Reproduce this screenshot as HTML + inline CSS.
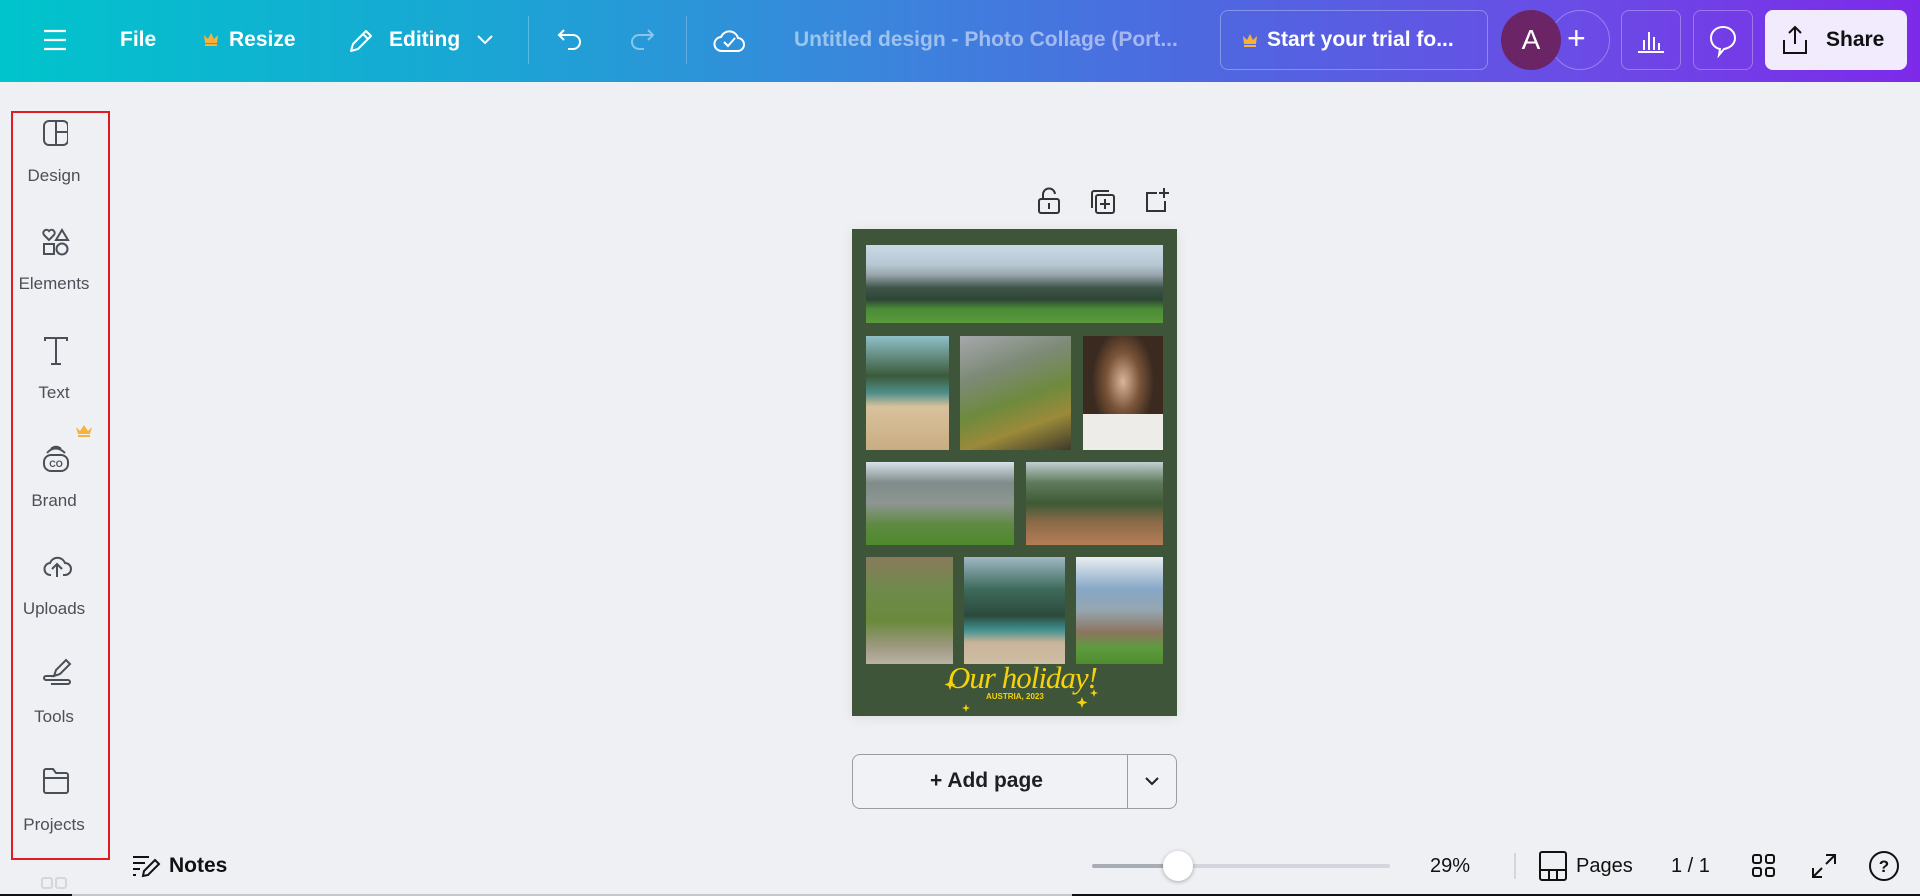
<!DOCTYPE html>
<html><head><meta charset="utf-8"><style>
*{margin:0;padding:0;box-sizing:border-box}
body{width:1920px;height:896px;overflow:hidden;background:#eff0f4;font-family:"Liberation Sans",sans-serif;position:relative}
.top{position:absolute;left:0;top:0;width:1920px;height:82px;background:linear-gradient(90deg,#00c4cc 0%,#1aa6d4 25%,#3a86dc 45%,#4d69e0 62%,#6a4ce6 82%,#7d2ae8 100%)}
.a{position:absolute}
.tw{color:#fff;font-weight:bold;font-size:21px;top:28px}
.lbl{position:absolute;width:98px;left:5px;text-align:center;font-size:16px;color:#4b4f57}
.ic{position:absolute;left:42px}
.ph{position:absolute}
</style></head><body>
<div class="top">
  <svg class="a" style="left:42px;top:28px" width="26" height="24"><path d="M2 3h22M2 12h22M2 21h22" stroke="#fff" stroke-width="2.2"/></svg>
  <div class="a tw" style="left:120px">File</div>
  <svg class="a" style="left:203px;top:31px" width="16" height="16"><path d="M1 4l4 4 3-6 3 6 4-4-1 8H2z" fill="#f7b23b"/><rect x="2" y="13" width="12" height="2" fill="#f7b23b"/></svg>
  <div class="a tw" style="left:229px">Resize</div>
  <svg class="a" style="left:346px;top:26px" width="30" height="30"><path d="M5 25l2-7L20 5l5 5-13 13zM17 8l5 5" stroke="#fff" stroke-width="2" fill="none" stroke-linejoin="round"/></svg>
  <div class="a tw" style="left:389px">Editing</div>
  <svg class="a" style="left:476px;top:34px" width="18" height="12"><path d="M2 2l7 7 7-7" stroke="#fff" stroke-width="2" fill="none"/></svg>
  <div class="a" style="left:528px;top:16px;width:1px;height:48px;background:rgba(255,255,255,.25)"></div>
  <svg class="a" style="left:556px;top:26px" width="30" height="28"><path d="M8 4L3 9l5 5M3 9h14a7 7 0 010 14h-5" stroke="#fff" stroke-width="2" fill="none"/></svg>
  <svg class="a" style="left:626px;top:26px" width="30" height="28"><path d="M22 4l5 5-5 5M27 9H13a7 7 0 000 14h5" stroke="rgba(255,255,255,.45)" stroke-width="2" fill="none"/></svg>
  <div class="a" style="left:686px;top:16px;width:1px;height:48px;background:rgba(255,255,255,.25)"></div>
  <svg class="a" style="left:713px;top:24px" width="34" height="32"><path d="M9 27a7 7 0 01-1-14 9 9 0 0117 1 6.5 6.5 0 01-1 13z" stroke="#fff" stroke-width="2" fill="none"/><path d="M11 18l4 4 7-8" stroke="#fff" stroke-width="2" fill="none"/></svg>
  <div class="a" style="left:794px;top:28px;font-size:21px;font-weight:bold;color:rgba(255,255,255,.5)">Untitled design - Photo Collage (Port...</div>
  <div class="a" style="left:1220px;top:10px;width:268px;height:60px;border:1px solid rgba(255,255,255,.3);border-radius:8px"></div>
  <svg class="a" style="left:1242px;top:32px" width="16" height="16"><path d="M1 4l4 4 3-6 3 6 4-4-1 8H2z" fill="#f7b23b"/><rect x="2" y="13" width="12" height="2" fill="#f7b23b"/></svg>
  <div class="a tw" style="left:1267px">Start your trial fo...</div>
  <div class="a" style="left:1550px;top:10px;width:60px;height:60px;border:1px solid rgba(255,255,255,.3);border-radius:50%"></div>
  <div class="a" style="left:1501px;top:10px;width:60px;height:60px;border-radius:50%;background:#6b2466;color:#fff;font-size:28px;text-align:center;line-height:60px">A</div>
  <div class="a" style="left:1567px;top:20px;color:#fff;font-size:32px;line-height:36px">+</div>
  <div class="a" style="left:1621px;top:10px;width:60px;height:60px;border:1px solid rgba(255,255,255,.3);border-radius:8px"></div>
  <svg class="a" style="left:1636px;top:26px" width="30" height="28"><path d="M2 26h26M8 24V14M13 24V6M18 24V11M23 24V17" stroke="#fff" stroke-width="2"/></svg>
  <div class="a" style="left:1693px;top:10px;width:60px;height:60px;border:1px solid rgba(255,255,255,.3);border-radius:8px"></div>
  <svg class="a" style="left:1707px;top:24px" width="32" height="34"><path d="M16 3C9 3 4 8 4 14s4 10 9 11l-1 6 5-6c6-1 11-5 11-11S23 3 16 3z" stroke="#fff" stroke-width="2" fill="none"/></svg>
  <div class="a" style="left:1765px;top:10px;width:142px;height:60px;border-radius:8px;background:#f1ebfd"></div>
  <svg class="a" style="left:1780px;top:24px" width="30" height="32"><path d="M15 20V3M9 9l6-6 6 6M4 16v13h22V16" stroke="#111" stroke-width="2" fill="none"/></svg>
  <div class="a" style="left:1826px;top:28px;font-size:21px;font-weight:bold;color:#111">Share</div>
</div>

<div class="a" style="left:11px;top:111px;width:99px;height:749px;border:2px solid #e01b24"></div>
<svg class="ic" style="top:119px" width="26" height="28"><rect x="2" y="2" width="24" height="24" rx="5" stroke="#4b4f57" stroke-width="2" fill="none"/><path d="M14 2v24M14 13h12" stroke="#4b4f57" stroke-width="2"/></svg>
<div class="lbl" style="top:166px;font-size:17px">Design</div>
<svg class="ic" style="top:228px" width="28" height="28"><path d="M7 12L2 7a3 3 0 015-4 3 3 0 015 4z" stroke="#4b4f57" stroke-width="2" fill="none"/><path d="M20 2l6 10H14z" stroke="#4b4f57" stroke-width="2" fill="none"/><rect x="2" y="16" width="10" height="10" stroke="#4b4f57" stroke-width="2" fill="none"/><circle cx="20" cy="21" r="5.5" stroke="#4b4f57" stroke-width="2" fill="none"/></svg>
<div class="lbl" style="top:274px;font-size:17px">Elements</div>
<svg class="ic" style="top:336px" width="28" height="30"><path d="M3 5V2h22v3M14 2v26M9 28h10" stroke="#4b4f57" stroke-width="2" fill="none"/></svg>
<div class="lbl" style="top:383px;font-size:17px">Text</div>
<svg class="a" style="left:75px;top:424px" width="18" height="14"><path d="M1 3l4 4 4-6 4 6 4-4-2 7H3z" fill="#f7b23b"/><rect x="3" y="11" width="12" height="2" fill="#f7b23b"/></svg>
<svg class="ic" style="top:443px" width="28" height="30"><path d="M5 10c5-6 12-6 18 0M9 6c3-3 7-3 10 0" stroke="#4b4f57" stroke-width="2" fill="none"/><rect x="2" y="12" width="24" height="16" rx="7" stroke="#4b4f57" stroke-width="2" fill="none"/><text x="14" y="24" font-size="9" font-weight="bold" text-anchor="middle" fill="#4b4f57" font-family="Liberation Sans">CO</text></svg>
<div class="lbl" style="top:491px;font-size:17px">Brand</div>
<svg class="ic" style="top:551px" width="30" height="28"><path d="M9 24a6 6 0 01-1-12 8 8 0 0115 0 6 6 0 010 12h-2M15 26V14M10 18l5-5 5 5" stroke="#4b4f57" stroke-width="2" fill="none"/></svg>
<div class="lbl" style="top:599px;font-size:17px">Uploads</div>
<svg class="ic" style="top:658px" width="30" height="30"><path d="M12 18l2-6 10-10 4 4-10 10z" stroke="#4b4f57" stroke-width="2" fill="none"/><path d="M12 18H4a2 2 0 000 4h22a2 2 0 010 4H9" stroke="#4b4f57" stroke-width="2" fill="none"/></svg>
<div class="lbl" style="top:707px;font-size:17px">Tools</div>
<svg class="ic" style="top:767px" width="28" height="28"><path d="M2 8V4a2 2 0 012-2h7l3 4h10a2 2 0 012 2v16a2 2 0 01-2 2H4a2 2 0 01-2-2zM2 11h24" stroke="#4b4f57" stroke-width="2" fill="none"/></svg>
<div class="lbl" style="top:815px;font-size:17px">Projects</div>
<div class="a" style="left:41px;top:877px;width:12px;height:12px;border-radius:3px;border:2px solid #d4d6db"></div>
<div class="a" style="left:55px;top:877px;width:12px;height:12px;border-radius:3px;border:2px solid #d4d6db"></div>

<svg class="a" style="left:1036px;top:187px" width="26" height="28"><rect x="3" y="12" width="20" height="14" rx="2" stroke="#333" stroke-width="2" fill="none"/><path d="M7 12V8a6 6 0 0112-1M13 16v6" stroke="#333" stroke-width="2" fill="none"/></svg>
<svg class="a" style="left:1089px;top:188px" width="28" height="28"><rect x="7" y="7" width="18" height="18" rx="2" stroke="#333" stroke-width="2" fill="none"/><path d="M3 20V5a2 2 0 012-2h15M16 11v10M11 16h10" stroke="#333" stroke-width="2" fill="none"/></svg>
<svg class="a" style="left:1143px;top:186px" width="28" height="28"><path d="M14 7H4v18h18V15M21 2v10M16 7h10" stroke="#333" stroke-width="2" fill="none"/></svg>

<div class="a" style="left:852px;top:229px;width:325px;height:487px;background:#3e5539;box-shadow:0 2px 12px rgba(0,0,0,.08)">
  <div class="ph" style="left:14px;top:16px;width:297px;height:78px;background:linear-gradient(180deg,#c9d9e6 0%,#b7c7d3 25%,#9aa6ad 38%,#3d5449 55%,#2e4634 70%,#4a8b37 82%,#5a9b3c 100%)"></div>
  <div class="ph" style="left:14px;top:107px;width:83px;height:114px;background:linear-gradient(180deg,#8fbfc8 0%,#3b5a3a 35%,#4f8f8a 50%,#d8c29c 62%,#c9ad82 100%)"></div>
  <div class="ph" style="left:108px;top:107px;width:111px;height:114px;background:linear-gradient(160deg,#a6a8ab 0%,#7d8a77 30%,#6e8a3d 55%,#9b8a3a 75%,#3e3a2a 100%)"></div>
  <div class="ph" style="left:231px;top:107px;width:80px;height:114px;background:radial-gradient(ellipse at 50% 40%,#d9b59a 0%,#7a5438 30%,#3a2a20 55%),linear-gradient(180deg,#3a2a1f,#f2f0ee);"></div>
  <div class="ph" style="left:231px;top:185px;width:80px;height:36px;background:#eeece8"></div>
  <div class="ph" style="left:14px;top:233px;width:148px;height:83px;background:linear-gradient(180deg,#d7e2ea 0%,#7f8c8a 25%,#8e9691 50%,#5f8a43 75%,#4d8a2c 100%)"></div>
  <div class="ph" style="left:174px;top:233px;width:137px;height:83px;background:linear-gradient(180deg,#c2cfd2 0%,#5f7a5b 25%,#3e5a35 50%,#8a6a48 72%,#b47d55 100%)"></div>
  <div class="ph" style="left:14px;top:328px;width:87px;height:107px;background:linear-gradient(180deg,#8a7a5c 0%,#6f8a4c 30%,#6a8a3c 60%,#a09a84 85%,#b9b3a3 100%)"></div>
  <div class="ph" style="left:112px;top:328px;width:101px;height:107px;background:linear-gradient(180deg,#9fb8c4 0%,#3e6a5c 30%,#2c4a3c 55%,#3f9090 68%,#c8b49a 80%,#cfbea4 100%)"></div>
  <div class="ph" style="left:224px;top:328px;width:87px;height:107px;background:linear-gradient(180deg,#e9eef2 0%,#86a7c6 30%,#95a6b0 50%,#8c7560 70%,#5e9a3e 85%,#4f8e30 100%)"></div>
  <svg class="a" style="left:90px;top:440px" width="160" height="50"><path d="M8 10l1.5 4 4 1.5-4 1.5-1.5 4-1.5-4-4-1.5 4-1.5z" fill="#f5d20c"/><path d="M140 28l1.5 4 4 1.5-4 1.5-1.5 4-1.5-4-4-1.5 4-1.5z" fill="#f5d20c"/><path d="M24 35l1 3 3 1-3 1-1 3-1-3-3-1 3-1z" fill="#f5d20c"/><path d="M152 20l1 3 3 1-3 1-1 3-1-3-3-1 3-1z" fill="#f5d20c"/></svg>
  <div class="a" style="left:96px;top:432px;width:144px;text-align:center;white-space:nowrap;font-family:'Liberation Serif',serif;font-style:italic;font-size:31px;color:#f5d20c;letter-spacing:-1px;line-height:34px">Our holiday!</div>
  <div class="a" style="left:134px;top:463px;font-size:8px;font-weight:bold;color:#f5d20c;white-space:nowrap">AUSTRIA, 2023</div>
</div>

<div class="a" style="left:852px;top:754px;width:325px;height:55px;border:1px solid #9a9ca3;border-radius:8px;background:#f1f2f5"></div>
<div class="a" style="left:1127px;top:755px;width:1px;height:53px;background:#9a9ca3"></div>
<div class="a" style="left:930px;top:769px;font-size:21px;font-weight:bold;color:#1f1f23">+ Add page</div>
<svg class="a" style="left:1144px;top:776px" width="16" height="10"><path d="M2 2l6 6 6-6" stroke="#1f1f23" stroke-width="2" fill="none"/></svg>

<svg class="a" style="left:131px;top:853px" width="30" height="26"><path d="M2 4h16M2 10h12M2 16h7M2 22h3" stroke="#111" stroke-width="2"/><path d="M12 23l1-5 11-11 4 4-11 11z" stroke="#111" stroke-width="2" fill="none"/></svg>
<div class="a" style="left:169px;top:854px;font-size:21px;font-weight:bold;color:#111">Notes</div>
<div class="a" style="left:1092px;top:864px;width:298px;height:4px;border-radius:2px;background:#d3d6dd"></div>
<div class="a" style="left:1092px;top:864px;width:86px;height:4px;border-radius:2px;background:#a8acb4"></div>
<div class="a" style="left:1163px;top:851px;width:30px;height:30px;border-radius:50%;background:#fff;box-shadow:0 1px 4px rgba(0,0,0,.3)"></div>
<div class="a" style="left:1430px;top:855px;font-size:20px;color:#111">29%</div>
<div class="a" style="left:1514px;top:853px;width:2px;height:26px;background:#d3d6dd"></div>
<svg class="a" style="left:1538px;top:850px" width="30" height="32"><rect x="2" y="2" width="26" height="28" rx="2" stroke="#111" stroke-width="2" fill="none"/><path d="M2 20h26M11 20v10M19 20v10" stroke="#111" stroke-width="2"/></svg>
<div class="a" style="left:1576px;top:855px;font-size:20px;color:#111">Pages</div>
<div class="a" style="left:1671px;top:855px;font-size:20px;color:#111">1 / 1</div>
<svg class="a" style="left:1751px;top:853px" width="26" height="26"><rect x="2" y="2" width="8" height="8" rx="2" stroke="#111" stroke-width="2" fill="none"/><rect x="15" y="2" width="8" height="8" rx="2" stroke="#111" stroke-width="2" fill="none"/><rect x="2" y="15" width="8" height="8" rx="2" stroke="#111" stroke-width="2" fill="none"/><rect x="15" y="15" width="8" height="8" rx="2" stroke="#111" stroke-width="2" fill="none"/></svg>
<svg class="a" style="left:1810px;top:852px" width="28" height="28"><path d="M16 3h9v9M25 3l-9 9M12 25H3v-9M3 25l9-9" stroke="#111" stroke-width="2" fill="none"/></svg>
<svg class="a" style="left:1868px;top:850px" width="32" height="32"><circle cx="16" cy="16" r="14" stroke="#111" stroke-width="2" fill="none"/><text x="16" y="22" text-anchor="middle" font-size="17" font-weight="bold" fill="#111" font-family="Liberation Sans">?</text></svg>
<div class="a" style="left:0;top:894px;width:1920px;height:2px;background:#111"></div>
<div class="a" style="left:72px;top:894px;width:1000px;height:2px;background:#c4c6cb"></div>
</body></html>
